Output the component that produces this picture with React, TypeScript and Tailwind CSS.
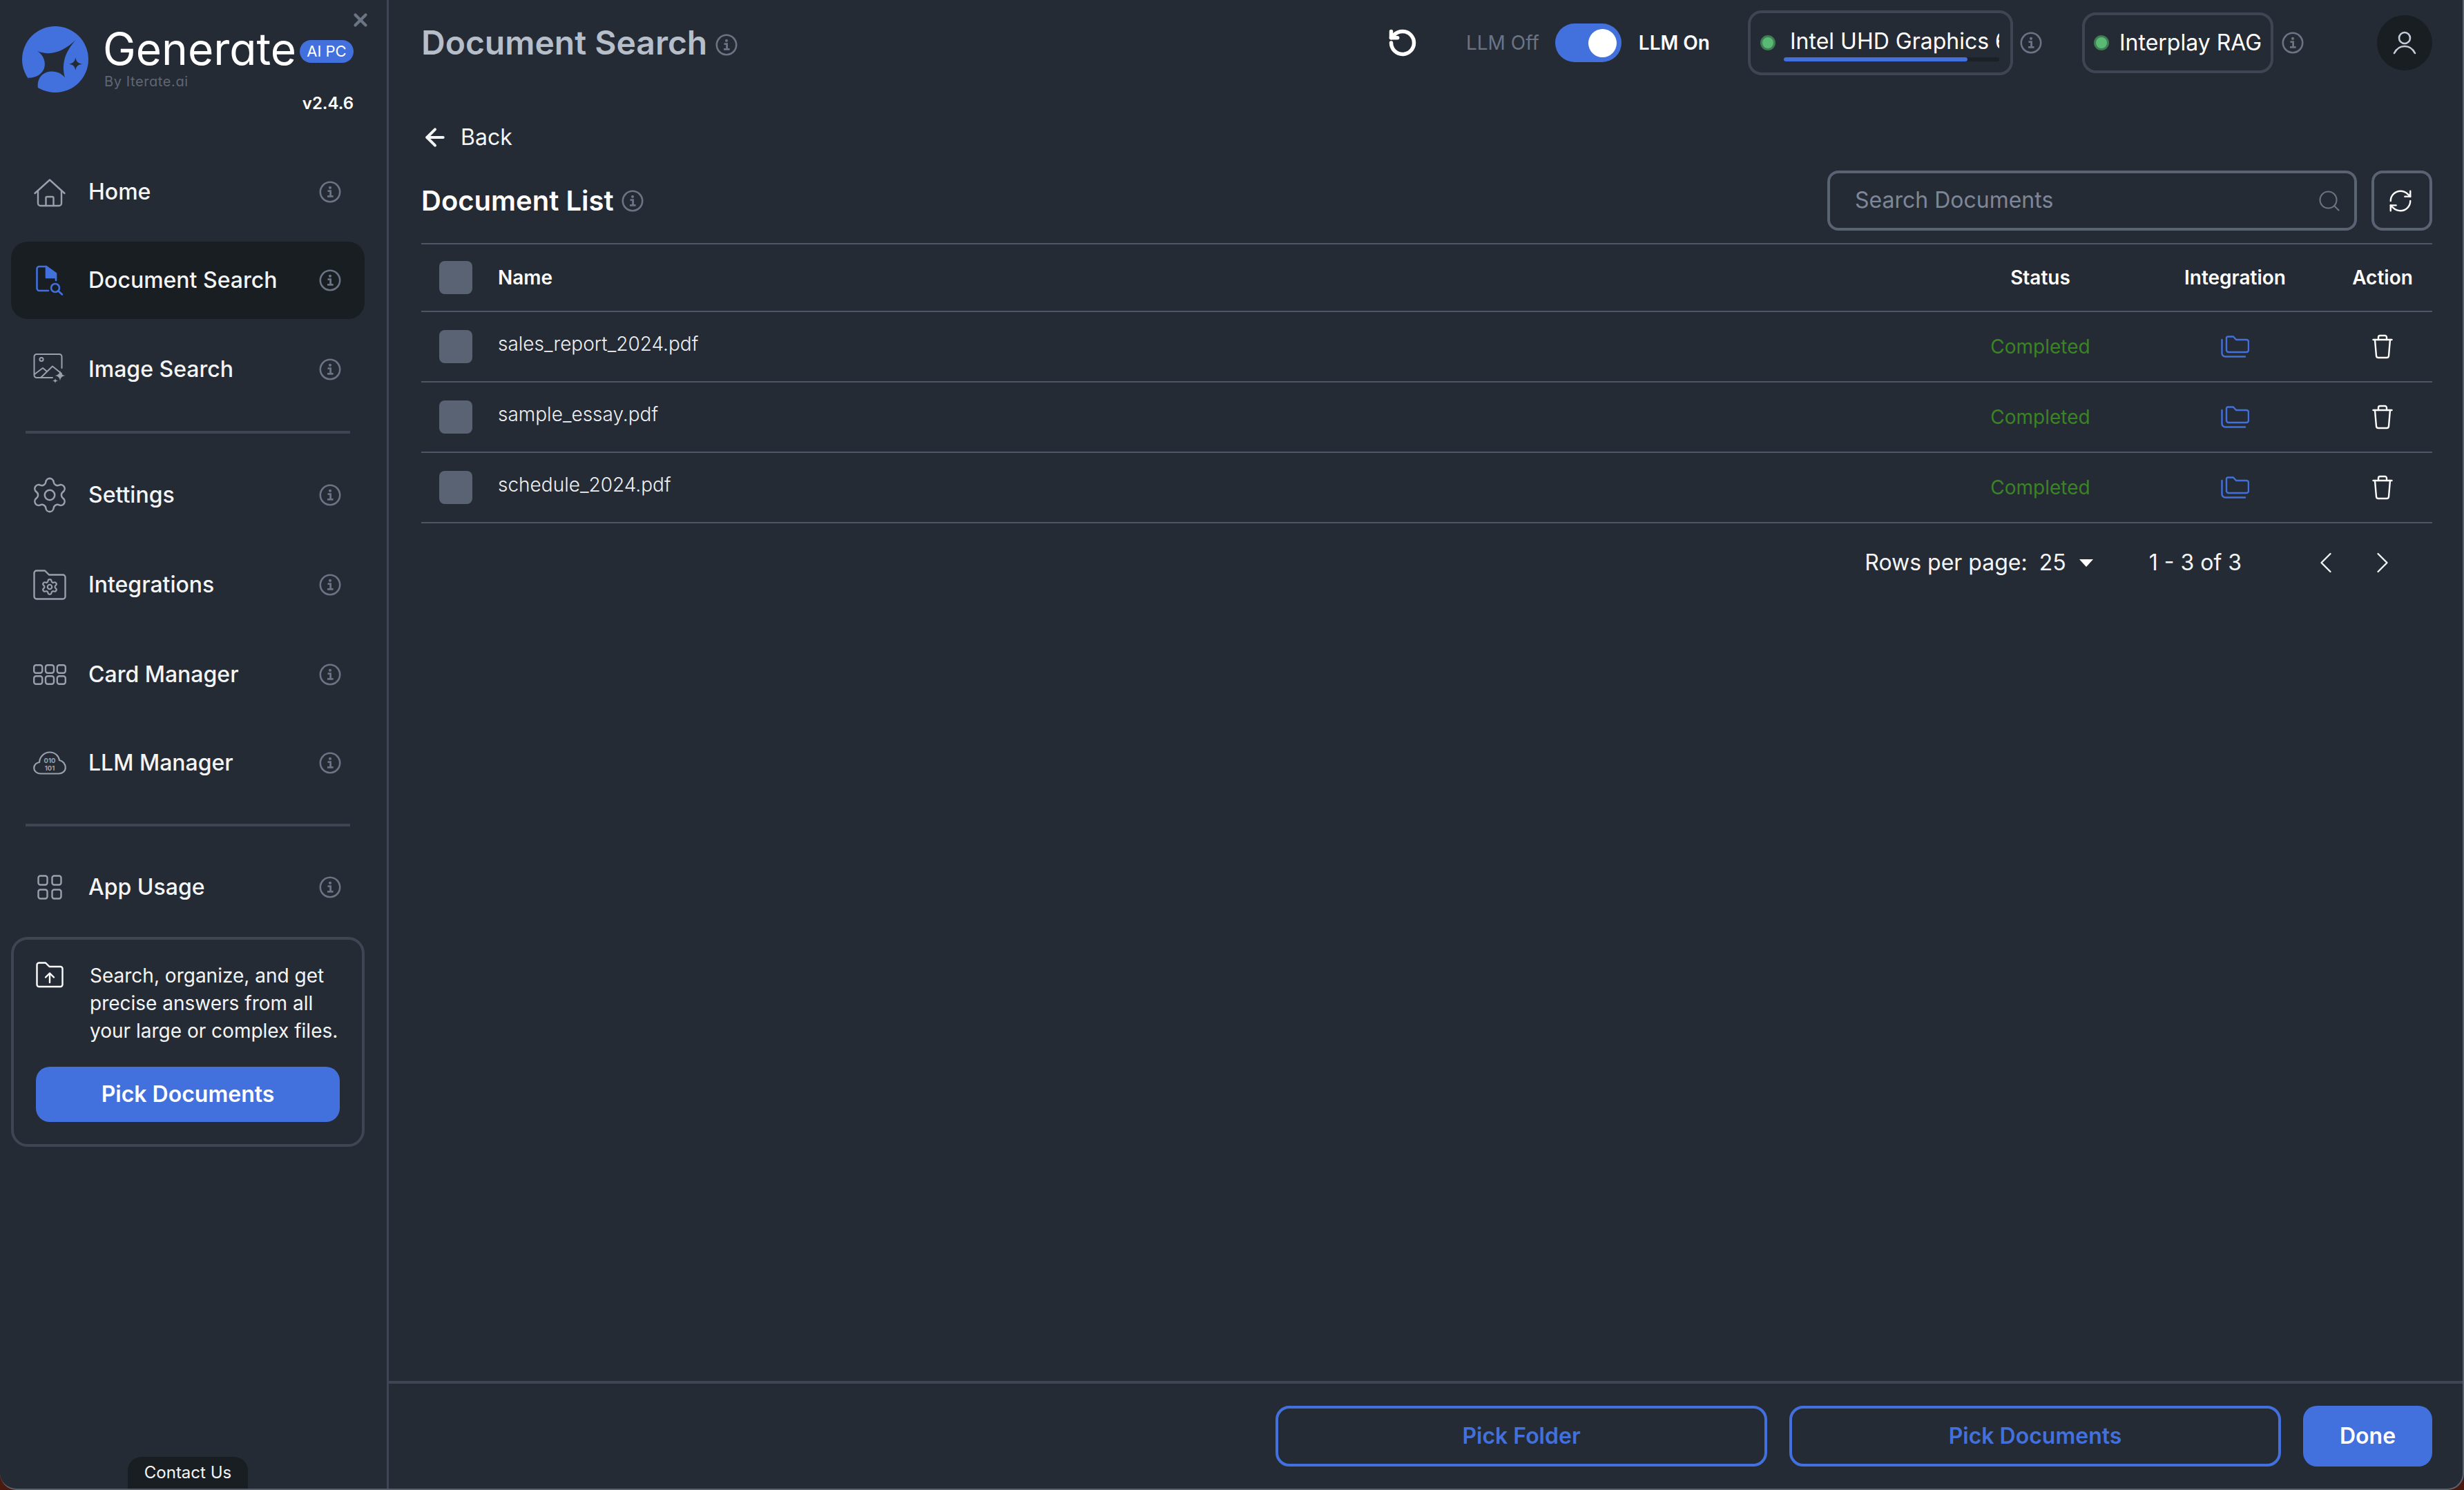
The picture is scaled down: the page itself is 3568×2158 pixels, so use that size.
import { ArrowLeft, ChevronLeft, ChevronRight, RefreshCw, RotateCcw, Search, Settings, X } from 'lucide-react'

function InfoIcon({ size = 32 }: { size?: number }) {
  return (
    <svg width={size} height={size} viewBox="0 0 32 32" fill="none" className="shrink-0 text-[#6b7484]" stroke="currentColor">
      <circle cx="16" cy="16" r="14.2" strokeWidth="2.6" />
      <circle cx="16" cy="9.8" r="2.1" fill="currentColor" stroke="none" />
      <path d="M12.5 14.6H16.6V22M12 22.4H20.6" strokeWidth="2.8" />
    </svg>
  )
}

function Logo() {
  return (
    <svg width="96" height="96" viewBox="36 39 288 288" className="shrink-0">
      <circle cx="180" cy="183" r="144" fill="#4271dd" />
      <path
        d="M272 96C215 150 160 170 103 147C130 165 140 195 132 222C122 250 90 265 62 263L78 300L105 305C100 265 125 240 155 236C185 232 210 245 222 262C205 200 225 145 272 96Z"
        fill="#252b34"
      />
      <path d="M268 175C271 193 278 200 297 203C278 206 271 213 268 231C265 213 258 206 240 203C258 200 265 193 268 175Z" fill="#252b34" />
    </svg>
  )
}

const navIconClass = 'text-[#99a1ae]'

function HomeIcon() {
  return (
    <svg width="48" height="48" viewBox="0 0 48 48" fill="none" stroke="currentColor" strokeWidth="2.4" strokeLinecap="round" strokeLinejoin="round" className={navIconClass}>
      <path d="M2.5 26L24 6.5L45.5 26" />
      <path d="M7 22V40.5A3.5 3.5 0 0 0 10.5 44H37.5A3.5 3.5 0 0 0 41 40.5V22" />
      <path d="M18.5 44V32.5A1.5 1.5 0 0 1 20 31H28A1.5 1.5 0 0 1 29.5 32.5V44" />
    </svg>
  )
}

function DocSearchIcon() {
  return (
    <svg width="48" height="48" viewBox="0 0 48 48" fill="none" stroke="#4271dd" strokeWidth="2.6" strokeLinecap="round" strokeLinejoin="round">
      <path d="M19 4H9A3.5 3.5 0 0 0 5.5 7.5V35.5A3.5 3.5 0 0 0 9 39H22" />
      <path d="M19 4L33 14V20H19Z" fill="#4271dd" />
      <path d="M33 20V24" />
      <circle cx="32" cy="35" r="6" />
      <path d="M36.5 39.5L42 44.5" />
    </svg>
  )
}

function ImageSparkIcon() {
  return (
    <svg width="48" height="48" viewBox="0 0 48 48" fill="none" stroke="currentColor" strokeWidth="2" strokeLinecap="round" strokeLinejoin="round" className={navIconClass}>
      <path d="M28 36H5A3.5 3.5 0 0 1 1.5 32.5V5.5A3.5 3.5 0 0 1 5 2H38A3.5 3.5 0 0 1 41.5 5.5V22" />
      <circle cx="12" cy="9.5" r="2.6" />
      <path d="M2 31L14 22L20 27M11 36L28 19.5L41 30" />
      <path d="M39 25.5C39.8 30.5 41.5 32.2 47 33C41.5 33.8 39.8 35.5 39 40.5C38.2 35.5 36.5 33.8 31 33C36.5 32.2 38.2 30.5 39 25.5Z" fill="currentColor" stroke="none" />
      <path d="M32 37C32.4 39.2 33.3 40.1 36 40.5C33.3 40.9 32.4 41.8 32 44C31.6 41.8 30.7 40.9 28 40.5C30.7 40.1 31.6 39.2 32 37Z" fill="currentColor" stroke="none" />
    </svg>
  )
}

function GearIcon() {
  return <Settings size={58} strokeWidth={1.05} className={`${navIconClass} shrink-0`} />
}

function FolderGearIcon() {
  return (
    <svg width="48" height="44" viewBox="0 0 48 44" fill="none" stroke="currentColor" strokeWidth="2.4" strokeLinejoin="round" className={navIconClass}>
      <path d="M1.5 5A3.5 3.5 0 0 1 5 1.5H17L23 7.5H43A3.5 3.5 0 0 1 46.5 11V39A3.5 3.5 0 0 1 43 42.5H5A3.5 3.5 0 0 1 1.5 39Z" />
      <Settings x={11} y={12} width={26} height={26} strokeWidth={2} />
    </svg>
  )
}

function CardsIcon() {
  const xs = [1.2, 18, 34.8]
  const ys = [1.2, 17.2]
  return (
    <svg width="48" height="30" viewBox="0 0 48 30" fill="none" stroke="currentColor" strokeWidth="2.4" className={navIconClass}>
      {ys.flatMap(y => xs.map(x => <rect key={`${x}-${y}`} x={x} y={y} width="12" height="11.6" rx="3" />))}
    </svg>
  )
}

function CloudIcon() {
  return (
    <svg width="48" height="34" viewBox="0 0 48 34" fill="none" stroke="currentColor" strokeWidth="2.2" className={navIconClass}>
      <path d="M11 32.5C5 32.5 1.2 28.5 1.2 24.2C1.2 19.5 5 16.5 9 16C9.5 8 16 1.5 24 1.5C32 1.5 37 7 38 13C43 14 46.8 18.5 46.8 24C46.8 29 42 32.5 37 32.5Z" />
      <text x="24" y="17" textAnchor="middle" fontSize="9.5" fontWeight="700" fill="currentColor" stroke="none" fontFamily="Inter, sans-serif">010</text>
      <text x="24" y="27.5" textAnchor="middle" fontSize="9.5" fontWeight="700" fill="currentColor" stroke="none" fontFamily="Inter, sans-serif">101</text>
    </svg>
  )
}

function AppsIcon() {
  return (
    <svg width="36" height="36" viewBox="0 0 36 36" fill="none" stroke="currentColor" strokeWidth="2.4" className={navIconClass}>
      <rect x="1.5" y="1.5" width="13" height="13" rx="3" />
      <rect x="21.5" y="1.5" width="13" height="13" rx="3" />
      <rect x="1.5" y="21.5" width="13" height="13" rx="3" />
      <rect x="21.5" y="21.5" width="13" height="13" rx="3" />
    </svg>
  )
}

function FolderUpIcon() {
  return (
    <svg width="40" height="38" viewBox="0 0 40 38" fill="none" stroke="white" strokeWidth="2.4" strokeLinecap="round" strokeLinejoin="round" className="shrink-0">
      <path d="M1.5 4.5A3 3 0 0 1 4.5 1.5H14L19.5 7H35.5A3 3 0 0 1 38.5 10V33A3 3 0 0 1 35.5 36H4.5A3 3 0 0 1 1.5 33Z" />
      <path d="M20 30V17M14 22.5L20 16.5L26 22.5" />
    </svg>
  )
}

function UserIcon() {
  return (
    <svg width="36" height="36" viewBox="0 0 36 36" fill="none" stroke="#c3ccd8" strokeWidth="2.6" strokeLinecap="round">
      <circle cx="18" cy="11" r="8" />
      <path d="M3 33C7 25 12 23 18 23C24 23 29 25 33 33" />
    </svg>
  )
}

function StackedFolderIcon() {
  return (
    <svg width="41" height="32" viewBox="0 0 41 32" fill="none" stroke="#4271dd" strokeWidth="2.4" strokeLinecap="round" strokeLinejoin="round">
      <path d="M8 3.5A2 2 0 0 1 10 1.5H18L22 6H37A3 3 0 0 1 40 9V21A3 3 0 0 1 37 24H11A3 3 0 0 1 8 21Z" />
      <path d="M1.5 6V25A5 5 0 0 0 6.5 30.5H35" />
    </svg>
  )
}

function TrashIcon() {
  return (
    <svg width="30" height="36" viewBox="0 0 30 36" fill="none" stroke="white" strokeWidth="2.4" strokeLinecap="round" strokeLinejoin="round">
      <path d="M1.5 8H28.5" />
      <path d="M9 8V4.5A2.5 2.5 0 0 1 11.5 2H18.5A2.5 2.5 0 0 1 21 4.5V8" />
      <path d="M4 8L6 31.5A3 3 0 0 0 9 34H21A3 3 0 0 0 24 31.5L26 8" />
    </svg>
  )
}

const topNav = [
  { label: 'Home', icon: <HomeIcon />, spacing: '' },
  { label: 'Document Search', icon: <DocSearchIcon />, spacing: 'mt-[16px]', active: true },
  { label: 'Image Search', icon: <ImageSparkIcon />, spacing: 'mt-[17px]' },
]

const middleNav = [
  { label: 'Settings', icon: <GearIcon />, spacing: '' },
  { label: 'Integrations', icon: <FolderGearIcon />, spacing: 'mt-[18px]' },
  { label: 'Card Manager', icon: <CardsIcon />, spacing: 'mt-[18px]' },
  { label: 'LLM Manager', icon: <CloudIcon />, spacing: 'mt-[16px]' },
]

function NavItem({ label, icon, spacing, active }: { label: string; icon: React.ReactNode; spacing: string; active?: boolean }) {
  return (
    <div className={`flex h-[112px] w-[512px] shrink-0 items-center rounded-[24px] ${spacing} ${active ? 'bg-[#191e23]' : ''}`}>
      <div className="ml-[32px] flex w-[48px] shrink-0 items-center justify-center">{icon}</div>
      <span className="ml-[33px] text-[32px] font-medium leading-[40px] -translate-x-[1px] text-[#f4f5f7]">{label}</span>
      <div className="ml-auto mr-[34px]">
        <InfoIcon />
      </div>
    </div>
  )
}

function Sidebar() {
  return (
    <aside className="relative flex h-full w-[563px] shrink-0 flex-col border-r-[3px] border-[#3f4653] pl-[16px]">
      <button className="absolute left-[507px] top-[14px] text-[#6b7484]">
        <X size={30} strokeWidth={3.4} />
      </button>

      <div className="-ml-[16px] flex h-[222px] shrink-0 pl-[32px] pt-[38px]">
        <Logo />
        <div className="ml-[23px] flex w-[361px] flex-col">
          <div className="mt-[2px] flex h-[58px] items-center">
            <span className="-ml-[2px] mt-[3px] text-[64px] font-normal leading-[58px] text-white [font-feature-settings:'cv11']">Generate</span>
            <span className="ml-auto mt-[10px] flex h-[33px] w-[78px] items-center justify-center rounded-full bg-[#4271dd] text-[22px] leading-none text-white">AI PC</span>
          </div>
          <span className="mt-[8px] text-[20px] leading-[24px] tracking-[0.6px] text-[#5f6775] [font-feature-settings:'cv11']">By Iterate.ai</span>
          <span className="mt-[6px] self-end text-[24px] font-semibold leading-[28px] text-white">v2.4.6</span>
        </div>
      </div>

      {topNav.map(item => <NavItem key={item.label} {...item} />)}
      <div className="ml-[21px] mt-[33px] h-[4px] w-[470px] shrink-0 bg-[#3f4653]" />
      <div className="mt-[33px] flex flex-col">
        {middleNav.map(item => <NavItem key={item.label} {...item} />)}
      </div>
      <div className="ml-[21px] mt-[32px] h-[4px] w-[470px] shrink-0 bg-[#3f4653]" />
      <div className="mt-[32px]">
        <NavItem label="App Usage" icon={<AppsIcon />} spacing="" />
      </div>

      <div className="mt-[16px] w-[512px] rounded-[24px] border-[4px] border-[#3f4653] p-[32px]">
        <div className="flex gap-[38px]">
          <FolderUpIcon />
          <p className="whitespace-nowrap text-[28px] leading-[40px] text-[#f4f5f7]">
            Search, organize, and get<br />precise answers from all<br />your large or complex files.
          </p>
        </div>
        <button className="mt-[32px] h-[80px] w-[440px] rounded-[20px] bg-[#4271dd] text-[32px] font-semibold text-white">Pick Documents</button>
      </div>

      <div className="ml-[169px] mt-auto flex h-[46px] w-[174px] items-center justify-center rounded-t-[20px] bg-[#191e23] text-[24px] text-[#f4f5f7]">
        Contact Us
      </div>
    </aside>
  )
}

function Header() {
  return (
    <header className="flex h-[124px] shrink-0 items-center">
      <h1 className="text-[48px] font-semibold leading-none text-[#b6bec9]">Document Search</h1>
      <div className="ml-[12px] mt-[6px]"><InfoIcon /></div>

      <div className="ml-auto flex items-center">
        <RotateCcw size={44} strokeWidth={3} className="text-white" />
        <span className="ml-[70px] text-[28px] text-[#6b7484]">LLM Off</span>
        <div className="ml-[23px] flex h-[56px] w-[96px] items-center justify-end rounded-full bg-[#4271dd] pr-[7px]">
          <div className="h-[41px] w-[41px] rounded-full bg-white" />
        </div>
        <span className="ml-[25px] text-[28px] font-semibold text-white">LLM On</span>

        <div className="ml-[55px] flex h-[94px] w-[384px] flex-col rounded-[20px] border-[4px] border-[#3f4653] pt-[21px]">
          <div className="flex h-[40px] items-center pl-[14px] pr-[16px]">
            <div className="mt-[4px] h-[22px] w-[22px] shrink-0 rounded-full border-[3px] border-[#3f7d52] bg-[#5ab974]" />
            <span className="ml-[21px] overflow-hidden whitespace-nowrap text-[32px] leading-[40px] text-white">Intel UHD Graphics 630</span>
          </div>
          <div className="ml-[48px] mr-[16px] mt-[3px] h-[6px] rounded-full bg-[#1c2127]">
            <div className="h-full w-[266px] rounded-full bg-[#4271dd]" />
          </div>
        </div>
        <div className="ml-[10px]"><InfoIcon /></div>

        <div className="ml-[58px] flex h-[88px] w-[277px] items-center rounded-[20px] border-[4px] border-[#3f4653] pl-[13px]">
          <div className="h-[22px] w-[22px] shrink-0 rounded-full border-[3px] border-[#3f7d52] bg-[#5ab974]" />
          <span className="ml-[15px] whitespace-nowrap text-[32px] leading-[40px] text-white">Interplay RAG</span>
        </div>
        <div className="ml-[12px]"><InfoIcon /></div>

        <div className="ml-[106px] flex h-[80px] w-[80px] items-center justify-center rounded-full bg-[#191e23]">
          <UserIcon />
        </div>
      </div>
    </header>
  )
}

const documents = ['sales_report_2024.pdf', 'sample_essay.pdf', 'schedule_2024.pdf']

const rowClass = 'grid grid-cols-[1fr_281px_283px_144px] items-center border-b-2 border-[#4f5767]'

function DocumentTable() {
  return (
    <div className="mt-[18px] border-t-2 border-[#4f5767]">
      <div className={`${rowClass} h-[98px] text-[28px] font-semibold leading-[36px] text-white`}>
        <div className="flex items-center pl-[26px]">
          <div className="h-[48px] w-[48px] rounded-[8px] bg-[#596373]" />
          <span className="ml-[37px]">Name</span>
        </div>
        <span className="text-center">Status</span>
        <span className="text-center">Integration</span>
        <span className="text-center">Action</span>
      </div>
      {documents.map(name => (
        <div key={name} className={`${rowClass} h-[102px]`}>
          <div className="flex items-center pl-[26px]">
            <div className="h-[48px] w-[48px] rounded-[8px] bg-[#596373]" />
            <span className="mb-[8px] ml-[37px] text-[28px] font-light leading-[36px] text-[#eef0f3]">{name}</span>
          </div>
          <span className="text-center text-[28px] leading-[36px] text-[#3a8424]">Completed</span>
          <div className="flex justify-center"><StackedFolderIcon /></div>
          <div className="flex justify-center"><TrashIcon /></div>
        </div>
      ))}
    </div>
  )
}

function Pagination() {
  return (
    <div className="flex h-[114px] items-center justify-end pr-[30px] text-[32px] text-[#f4f5f7]">
      <span>Rows per page:</span>
      <span className="ml-[17px]">25</span>
      <div className="ml-[19px] mr-[81px] mt-[1px] h-0 w-0 border-x-[10px] border-t-[11px] border-x-transparent border-t-white" />
      <span>1 - 3 of 3</span>
      <div className="ml-[80px] flex w-[83px] justify-center"><ChevronLeft size={52} strokeWidth={1.1} /></div>
      <div className="-translate-x-[1px] flex w-[83px] justify-center"><ChevronRight size={52} strokeWidth={1.1} /></div>
    </div>
  )
}

export default function App() {
  return (
    <div className="h-[2158px] w-[3568px] overflow-hidden bg-[#4a1a10] font-['Inter',sans-serif]">
      <div className="flex h-full w-full rounded-b-[24px] border-b-2 border-r-2 border-[#5c626b] bg-[#252b34]">
        <Sidebar />
        <main className="flex h-full min-w-0 flex-1 flex-col">
          <div className="flex flex-1 flex-col pl-[47px] pr-[44px]">
            <Header />
            <div className="mt-[55px] flex h-[40px] items-center text-[#f4f5f7]">
              <ArrowLeft size={40} strokeWidth={2.4} />
              <span className="ml-[17px] text-[32px] leading-[40px]">Back</span>
            </div>
            <div className="mt-[28px] flex items-center">
              <h2 className="text-[40px] font-semibold leading-none text-white">Document List</h2>
              <div className="ml-[11px] mt-[1px]"><InfoIcon /></div>
              <div className="ml-auto flex h-[87px] w-[767px] items-center rounded-[16px] border-[4px] border-[#596373] pl-[36px] pr-[18px]">
                <span className="mb-[2px] text-[32px] text-[#7e8797]">Search Documents</span>
                <Search size={36} strokeWidth={1.4} className="ml-auto text-[#6b7484]" />
              </div>
              <button className="ml-[21px] flex h-[87px] w-[88px] items-center justify-center rounded-[16px] border-[4px] border-[#596373] pr-[4px] text-white">
                <RefreshCw size={38} strokeWidth={1.5} />
              </button>
            </div>
            <DocumentTable />
            <Pagination />
          </div>
          <footer className="flex h-[156px] shrink-0 items-center justify-end gap-[32px] border-t-4 border-[#3f4653] pr-[44px]">
            <button className="h-[88px] w-[712px] rounded-[20px] border-[4px] border-[#4271dd] text-[32px] font-semibold text-[#4271dd]">Pick Folder</button>
            <button className="h-[88px] w-[712px] rounded-[20px] border-[4px] border-[#4271dd] text-[32px] font-semibold text-[#4271dd]">Pick Documents</button>
            <button className="h-[88px] w-[187px] rounded-[20px] bg-[#4271dd] text-[32px] font-semibold text-white">Done</button>
          </footer>
        </main>
      </div>
    </div>
  )
}
